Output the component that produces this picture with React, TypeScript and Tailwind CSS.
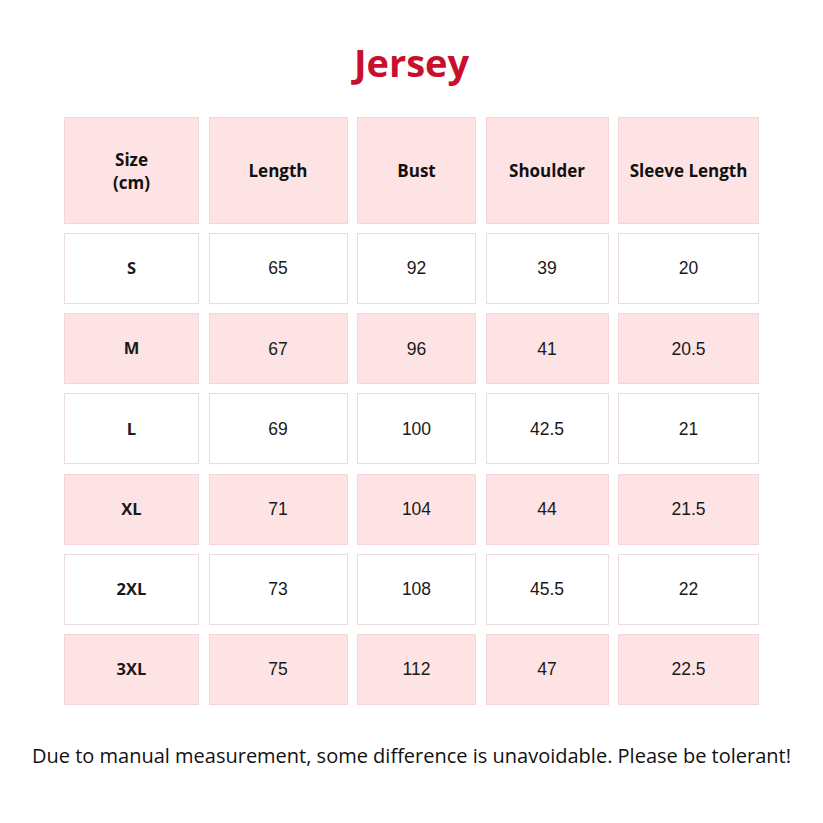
import React from "react";

const headers = ["Size\n(cm)", "Length", "Bust", "Shoulder", "Sleeve Length"];
const rows = [
  ["S", "65", "92", "39", "20"],
  ["M", "67", "96", "41", "20.5"],
  ["L", "69", "100", "42.5", "21"],
  ["XL", "71", "104", "44", "21.5"],
  ["2XL", "73", "108", "45.5", "22"],
  ["3XL", "75", "112", "47", "22.5"],
];

export default function App() {
  return (
    <div className="w-[823px] h-[823px] bg-white flex flex-col" style={{ fontFamily: "'Open Sans', sans-serif" }}>
      <h1 className="mt-[39px] h-[46px] text-center text-[38px] leading-[46px] font-bold text-[#c8102e]">Jersey</h1>
      <div className="mt-[32px] ml-[64px] grid grid-cols-[135px_139px_119px_123px_141px] gap-x-[9.5px]">
        {headers.map((h, i) => (
          <div
            key={i}
            className="h-[107px] bg-[#fde3e3] border border-[#f4d6d8] flex items-center justify-center text-center whitespace-pre-line text-[17px] leading-[23px] font-bold text-[#111]"
          >
            {h}
          </div>
        ))}
      </div>
      <div className="mt-[9px] ml-[64px] grid grid-cols-[135px_139px_119px_123px_141px] gap-x-[9.5px] gap-y-[9.2px]">
        {rows.map((r, ri) =>
          r.map((c, ci) => (
            <div
              key={ri + "-" + ci}
              className={
                "h-[71px] border flex items-center justify-center text-[#1a1a1a] " +
                (ri % 2 === 1 ? "bg-[#fde3e3] border-[#f4d6d8] " : "bg-white border-[#eadcdf] ") +
                (ci === 0 ? "font-bold text-[16.5px]" : "text-[17.5px]")
              }
              style={{ fontFamily: ci === 0 ? "'Open Sans', sans-serif" : "'Liberation Sans', Arial, sans-serif" }}
            >
              {c}
            </div>
          ))
        )}
      </div>
      <p className="mt-[36px] text-center text-[20px] text-[#111]">
        Due to manual measurement, some difference is unavoidable. Please be tolerant!
      </p>
    </div>
  );
}
